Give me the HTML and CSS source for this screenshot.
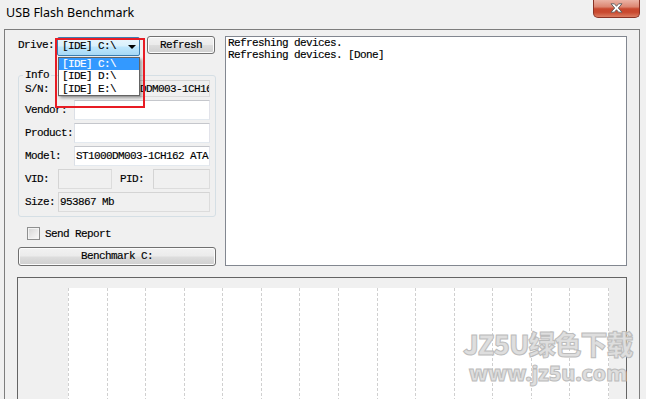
FILE: index.html
```html
<!DOCTYPE html>
<html>
<head>
<meta charset="utf-8">
<title>USB Flash Benchmark</title>
<link rel="stylesheet" href="styles.css">
</head>
<body>
<div class="titlebar">
  <span class="title">USB Flash Benchmark</span>
  <div class="close">
    <svg width="13" height="10" viewBox="0 0 13 10"><path d="M1 0.8 H4.4 L6.5 3.3 L8.6 0.8 H12 L8.3 5 L12 9.2 H8.6 L6.5 6.7 L4.4 9.2 H1 L4.7 5 Z" fill="#fff" stroke="#5a5a5a" stroke-width="0.9" stroke-linejoin="round"/></svg>
  </div>
</div>
<div class="frame">
  <div class="top">
    <div class="left">
      <div class="drive-row">
        <span class="drive-lbl">Drive:</span>
        <div class="combo"><span>[IDE] C:\</span><span class="arrow"></span></div>
        <div class="btn refresh">Refresh</div>
      </div>
      <fieldset class="info">
        <legend>Info</legend>
        <div class="row first"><span class="lbl">S/N:</span><div class="field ro sn">DDM003-1CH162</div></div>
        <div class="row"><span class="lbl wide">Vendor:</span><div class="field"></div></div>
        <div class="row"><span class="lbl wide">Product:</span><div class="field"></div></div>
        <div class="row"><span class="lbl wide">Model:</span><div class="field">ST1000DM003-1CH162 ATA</div></div>
        <div class="row"><span class="lbl">VID:</span><div class="field ro vid"></div><span class="lbl pid">PID:</span><div class="field ro"></div></div>
        <div class="row"><span class="lbl">Size:</span><div class="field ro">953867 Mb</div></div>
      </fieldset>
      <div class="check-row"><span class="checkbox"></span><span>Send Report</span></div>
      <div class="btn bench">Benchmark C:</div>
    </div>
    <div class="log">Refreshing devices.<br>Refreshing devices. [Done]</div>
  </div>
  <div class="graph">
    <div class="plot">
      <div class="vline"></div><div class="vline"></div><div class="vline"></div><div class="vline"></div><div class="vline"></div>
      <div class="vline"></div><div class="vline"></div><div class="vline"></div><div class="vline"></div><div class="vline"></div>
      <div class="vline"></div><div class="vline"></div><div class="vline"></div><div class="vline"></div><div class="vline"></div>
    </div>
  </div>
</div>
<div class="dropdown">
  <div class="item sel">[IDE] C:\</div>
  <div class="item">[IDE] D:\</div>
  <div class="item">[IDE] E:\</div>
</div>
<div class="redbox"></div>
<div class="watermark">
  <div class="wm1">JZ5U绿色下载</div>
  <div class="wm2">www.jz5u.com</div>
</div>
</body>
</html>
```
FILE: styles.css
```css
* { box-sizing: border-box; }
html, body { margin: 0; padding: 0; }
body {
  width: 646px;
  height: 399px;
  overflow: hidden;
  position: relative;
  background: #f0f0f0;
  font-family: "Liberation Mono", monospace;
  font-size: 11px;
  letter-spacing: -0.6px;
  color: #000;
  -webkit-text-stroke: 0.15px #000;
}

.titlebar {
  height: 29px;
  display: flex;
  justify-content: space-between;
  align-items: flex-start;
}
.title {
  font-family: "Noto Sans", sans-serif;
  font-size: 12.5px;
  letter-spacing: 0;
  line-height: 16px;
  padding: 5px 0 0 6px;
  -webkit-text-stroke: 0;
}
.close {
  width: 47px;
  height: 18px;
  margin-right: 6px;
  border: 1px solid #8a3326;
  border-top: none;
  border-radius: 0 0 5px 5px;
  background: linear-gradient(#ebb3a5 0%, #dc8672 40%, #c8482f 52%, #c9492f 72%, #dc7d62 100%);
  display: flex;
  align-items: center;
  justify-content: center;
}
.close svg { display: block; margin-top: -1px; }

.frame {
  margin-left: 4px;
  width: 636px;
  height: 370px;
  border: 1px solid #7d7d7d;
  border-bottom: none;
  padding: 6px 12px 0 13px;
}
.top {
  display: flex;
  gap: 9px;
  height: 230px;
}
.left {
  width: 198px;
  display: flex;
  flex-direction: column;
}
.drive-row {
  display: flex;
  align-items: flex-start;
  height: 19px;
}
.drive-lbl {
  width: 39px;
  line-height: 19px;
}
.combo {
  width: 83px;
  height: 19px;
  margin-top: 1px;
  border: 1px solid #3c7fb1;
  border-radius: 2px;
  background: linear-gradient(#eaf6fd 0%, #d9f0fc 48%, #bee6fd 52%, #a7d9f5 100%);
  display: flex;
  align-items: center;
  justify-content: space-between;
  padding: 0 3px 0 4px;
  line-height: 17px;
}
.arrow {
  width: 0;
  height: 0;
  border-left: 4px solid transparent;
  border-right: 4px solid transparent;
  border-top: 4px solid #000;
  margin-top: 1px;
}
.btn {
  border: 1px solid #707070;
  border-radius: 3px;
  background: linear-gradient(#f2f2f2 0%, #ebebeb 48%, #dddddd 52%, #cfcfcf 100%);
  box-shadow: inset 0 0 0 1px #fcfcfc;
  text-align: center;
}
.refresh {
  margin-left: 7px;
  width: 68px;
  height: 18px;
  line-height: 16px;
}

fieldset.info {
  margin: 15px 0 0;
  padding: 0 5px 4px 6px;
  border: 1px solid #d5dfe5;
  border-radius: 3px;
  min-width: 0;
}
fieldset.info legend {
  line-height: 10px;
  padding: 0 2px;
  margin-left: -2px;
}
.row {
  display: flex;
  align-items: center;
  height: 20px;
  margin-top: 3px;
}
.row.first { height: 17px; margin-top: 0; }
.lbl { width: 33px; flex: none; }
.lbl.wide { width: 49px; }
.lbl.pid { margin-left: 8px; }
.field {
  flex: 1;
  height: 100%;
  min-width: 0;
  background: #fff;
  border: 1px solid;
  border-color: #c5c7cc #e2e3ea #e3e9ef #dbdfe6;
  padding-left: 1px;
  display: flex;
  align-items: center;
  white-space: nowrap;
  overflow: hidden;
}
.field.ro {
  background: #f0f0f0;
  border-color: #d4d4d4 #dcdcdc #dcdcdc #d4d4d4;
}
.field.sn { padding-left: 81px; }
.field.vid { flex: none; width: 54px; }

.check-row {
  margin-top: 10px;
  padding-left: 9px;
  height: 13px;
  display: flex;
  align-items: center;
  gap: 5px;
}
.checkbox {
  width: 13px;
  height: 13px;
  border: 1px solid #8e8f8f;
  background: linear-gradient(135deg, #d3d3d3 0%, #e8e8e8 50%, #fafafa 100%);
  box-shadow: inset 0 0 0 1px #f4f4f4;
}
.bench {
  margin-top: 7px;
  height: 19px;
  line-height: 17px;
}

.log {
  width: 402px;
  height: 230px;
  background: #fff;
  border: 1px solid #828790;
  padding: 0 2px;
  line-height: 12px;
}

.graph {
  margin: 11px 0 0 -1px;
  width: 610px;
  height: 122px;
  border: 1px solid #646464;
  border-bottom: none;
  padding: 10px 0 0 50px;
}
.plot {
  width: 541px;
  height: 111px;
  background: #fff;
  display: flex;
  justify-content: space-between;
}
.vline {
  width: 1px;
  height: 100%;
  background: repeating-linear-gradient(to bottom, #d0d0d0 0 3px, transparent 3px 5px);
}

.dropdown {
  position: absolute;
  left: 58px;
  top: 57px;
  width: 82px;
  height: 39px;
  background: #fff;
  border: 1px solid #646464;
  box-shadow: 2px 2px 3px rgba(0, 0, 0, 0.35);
}
.item {
  height: 12.33px;
  line-height: 12px;
  padding-left: 3px;
}
.item.sel {
  background: #3399ff;
  color: #fff;
  -webkit-text-stroke: 0.15px #fff;
}
.redbox {
  position: absolute;
  left: 55px;
  top: 38px;
  width: 90px;
  height: 70px;
  border: 2px solid #e81c24;
}
.watermark {
  position: absolute;
  left: 463px;
  top: 327px;
  font-family: "Noto Sans CJK SC", "Noto Sans", sans-serif;
  font-weight: 900;
  letter-spacing: 0;
  color: #dedede;
  -webkit-text-stroke: 1px #bcbcbc;
}
.wm1 {
  font-size: 27px;
  line-height: 34px;
  letter-spacing: -1px;
}
.wm2 {
  font-family: "Noto Sans", sans-serif;
  font-size: 21px;
  line-height: 20px;
  margin-top: 2px;
  margin-left: 6px;
}
```
